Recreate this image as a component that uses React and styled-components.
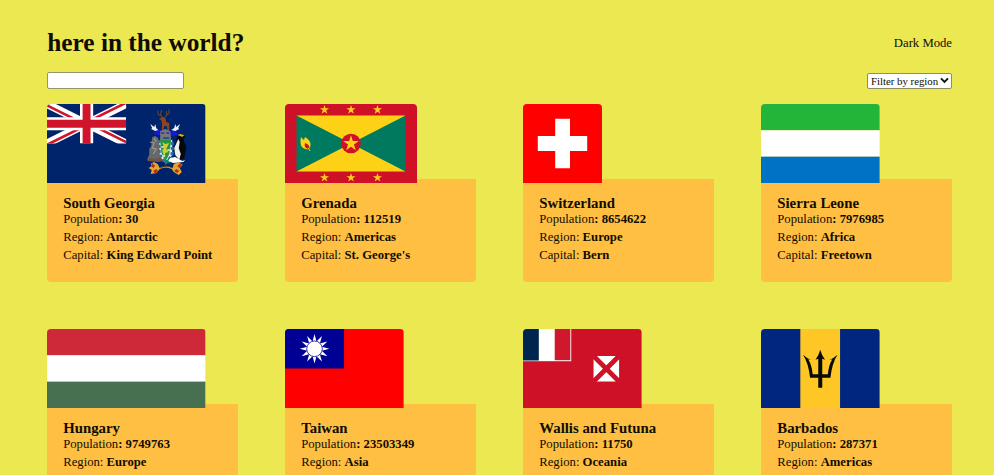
import React from "react";
import styled, { createGlobalStyle } from "styled-components";

const GlobalStyle = createGlobalStyle`
  * { box-sizing: border-box; }
  html, body { margin: 0; height: 100%; overflow: hidden; background: #ebe852; }
  body { font-family: "Liberation Serif", "Times New Roman", serif; font-size: 12.7px; color: #100c00; }
`;

const Page = styled.main`
  height: 475px;
  overflow: hidden;
  padding: 27.5px 42px 0 47.3px;
  background: #ebe852;
`;

const Bar = styled.header`
  display: flex;
  justify-content: space-between;
  align-items: center;
  width: 904.7px;
  height: 31px;
`;

const Heading = styled.h1`
  margin: -2px 0 0;
  font-size: 25.3px;
  line-height: 29px;
`;

const ModeToggle = styled.span`
  line-height: 15px;
`;

const Filters = styled.div`
  display: flex;
  justify-content: space-between;
  width: 904.7px;
  height: 17px;
  margin: 13.5px 0 15px;
`;

const SearchInput = styled.input`
  width: 136.5px;
  height: 17px;
  padding: 1px 2px;
  border: 1px solid #96946a;
  border-radius: 2px;
  background: #fff;
  font: inherit;
`;

const SelectWrap = styled.div`
  display: flex;
  align-items: center;
  justify-content: space-between;
  width: 85px;
  height: 16px;
  margin-top: 0.5px;
  padding: 0 2px 0 3px;
  border: 1px solid #8f8d62;
  border-radius: 2px;
  background: #fff;
  font-size: 10.8px;
  white-space: nowrap;
`;

const Grid = styled.section`
  display: grid;
  grid-template-columns: repeat(4, 190.4px);
  column-gap: 47.65px;
  row-gap: 47.5px;
`;

const Card = styled.article`
  height: 177.6px;
`;

const FlagFrame = styled.div`
  position: relative;
  width: ${(p) => p.$width}px;
  height: 79px;
  overflow: hidden;
  border-radius: 4px 4px 0 0;

  > svg { display: block; width: 100%; height: 100%; }
`;

const Details = styled.div`
  height: 102.6px;
  margin-top: -4px;
  padding: 16.2px 15.9px 0;
  border-radius: 0 0 4px 4px;
  background: #ffbf43;
`;

const Name = styled.h3`
  margin: 0 0 1px;
  font-size: 14.8px;
  line-height: 16px;
`;

const Fact = styled.p`
  margin: 0 0 3px;
  line-height: 15px;
  white-space: nowrap;
`;

const starPoints = (cx, cy, outer, inner, tips) =>
  Array.from({ length: tips * 2 }, (_, i) => {
    const r = i % 2 ? inner : outer;
    const a = (Math.PI * i) / tips - Math.PI / 2;
    return `${(cx + r * Math.cos(a)).toFixed(2)},${(cy + r * Math.sin(a)).toFixed(2)}`;
  }).join(" ");

const Star = ({ x, y, r }) => <polygon points={starPoints(x, y, r, r * 0.382, 5)} fill="#fcd116" />;

const SouthGeorgia = () => (
  <svg viewBox="0 0 158 79" preserveAspectRatio="none">
    <rect width="158" height="79" fill="#00246b" />
    <svg width="79" height="39.5" viewBox="0 0 60 30" preserveAspectRatio="none">
      <path d="M0 0 60 30M60 0 0 30" stroke="#fff" strokeWidth="6" />
      <path d="M0 1 30 16M60 29 30 14M60 -1 30 14M0 31 30 16" stroke="#cf142b" strokeWidth="2" />
      <path d="M30 0V30M0 15H60" stroke="#fff" strokeWidth="10" />
      <path d="M30 0V30M0 15H60" stroke="#cf142b" strokeWidth="6" />
    </svg>
    {/* deer crest */}
    <path d="M116.5 14.5 114 12 111 10.5 110.5 6.5M113 11.5 114.5 6M117.5 14 119.5 11 122 9 121.5 5.5M119.5 11 119 7" stroke="#694326" strokeWidth="1.1" fill="none" />
    <path d="m115 13 3 1 1 4 3 1v7h-1.7l-.8-4-2.5.3-.8 3.7h-1.5l.1-8-1-2-2-1z" fill="#8b451e" />
    {/* helm and mantling */}
    <path d="m108 28 3-3 5 3 1-2h4l2 2 6-2 1 5-5 1-4-2-7 1-4 0-4-1z" fill="#1717dc" />
    <path d="m113 27 5-2 5 2 1 9h-11z" fill="#77777b" />
    <path d="M114 29h3m2 0h3M116 34h6" stroke="#253b8f" strokeWidth="1.5" />
    <path d="m103 20 4 3 1-3 1 4 2 2-3 1-4-2 1-1zM133 20l-4 3-1-3-1 4-3 2 4 1 4-2-1-1z" fill="#eef1fb" />
    {/* shield */}
    <path d="M112 36h13v12q0 7-6.5 11-6.5-4-6.5-11z" fill="#e0e9f2" />
    <path d="M112 36v13q2 6 6.5 10 4.5-4 6.5-10V36" fill="none" stroke="#2c6dac" strokeWidth="3" strokeDasharray="3 2" />
    <path d="M113 36h11l-2 14-4 8-4-10z" fill="#219344" />
    <path d="m115 38 3 2 4-1-3 6 2 3-3 1-1 5-2-8 2-2z" fill="#d1cd35" />
    <path d="M114 43h3m3 3h3m-8 6h3" stroke="#e5e9ba" strokeWidth="1.4" />
    {/* seal */}
    <path d="m105 33 3-1 3 2 1 7v9l3 6-4 1h-10l-1-2 2-4v-6l2-3z" fill="#656969" />
    <path d="m103 38 4 1-2 5 4 1-3 5M107 34l2 4" stroke="#999b98" strokeWidth="1.1" fill="none" />
    <path d="m100 57 3-3 5 1 5-2 3 4-5 1z" fill="#725249" />
    {/* penguin */}
    <path d="m130 31 5-1 3 2-2 3 3 8-1 6-1 6-6 1-3-5-1-7 2-7z" fill="#07080c" />
    <path d="m131 35 1.5 3-1 6 2 6-1.5 6-4-5-1-7z" fill="#eff0ed" />
    <path d="m130 31 3-1 4 1-2 2-2-1z" fill="#d5b42c" />
    <path d="m116 58 5-3 3-2 1 4-3 2z" fill="#008b67" />
    <path d="m123 54 5-1 7 4 3-1-2 2-10 1-5-2z" fill="#fff" />
    {/* ribbon */}
    <path d="m104 60 3-2 4 2 2 4q7-3 13 0l1-4 5-2 4 3-3 3 2 4-3 3-5-3-2-3q-6-3-12 0l-3 4-6 1 1-4-3-2 3-2z" transform="translate(-.5 0)" fill="#dfa632" />
    <path d="m105 59 3 3-2 2-2-2M133 59l-3 3 2 2 3-2M106 67l3-2 2 2-3 3M132 67l-3-2-2 2 3 2" fill="#b82f19" />
    <path d="M113 64q6-3 12 0" fill="none" stroke="#77551c" strokeWidth="1.2" strokeDasharray="1 1" />
  </svg>
);

const Grenada = () => (
  <svg viewBox="0 0 132 79" preserveAspectRatio="none">
    <rect width="132" height="79" fill="#ce1126" />
    <rect x="11.5" y="11.5" width="109" height="56" fill="#007a5e" />
    <path d="M11.5 11.5h109L11.5 67.5h109z" fill="#fcd116" />
    <circle cx="66" cy="39.5" r="9.8" fill="#ce1126" />
    <Star x={66} y={39.5} r={8.2} />
    {[39.5, 66, 92.5].map((x) => (
      <React.Fragment key={x}>
        <Star x={x} y={5.8} r={4.8} />
        <Star x={x} y={73.7} r={4.8} />
      </React.Fragment>
    ))}
    <path d="M16 33c1 1 1.500 2 3 3l1-3c3 2 5.500 4 5.500 7 .3 4-2 6-5 5-4-1-6-4-4.500-12z" fill="#fcd116" />
    <path d="M20 39c3 1 5 3 4 5l-1 1c-3-1-4-3-3-6z" fill="#ce1126" />
    <path d="m23 44 2 3" stroke="#fcd116" />
  </svg>
);

const Switzerland = () => (
  <svg viewBox="0 0 79 79">
    <rect width="79" height="79" fill="#f00" />
    <path d="M32.2 14.8h14.8v17.3h17.2v14.8H47v17.3H32.2V46.9H14.8V32.1h17.4z" fill="#fff" />
  </svg>
);

const Tricolor = ({ colors }) => (
  <svg viewBox="0 0 3 3" preserveAspectRatio="none">
    {colors.map((fill, i) => <rect key={i} y={i} width="3" height="1" fill={fill} />)}
  </svg>
);

const Taiwan = () => (
  <svg viewBox="0 0 118.5 79" preserveAspectRatio="none">
    <rect width="118.5" height="79" fill="#f00" />
    <rect width="59" height="39.5" fill="#000095" />
    <polygon points={starPoints(29.5, 19.8, 14.8, 7.6, 12)} fill="#fff" />
    <circle cx="29.5" cy="19.8" r="7.8" fill="#fff" stroke="#000095" strokeWidth=".8" />
  </svg>
);

const Wallis = () => (
  <svg viewBox="0 0 118.5 79" preserveAspectRatio="none">
    <rect width="118.5" height="79" fill="#ce1126" />
    <rect width="48.2" height="32.2" fill="#fff" />
    <rect width="15.8" height="31.5" fill="#00264f" />
    <rect x="31.7" width="15.6" height="31.2" fill="#d0182c" />
    <rect x="70.5" y="27" width="25.5" height="25.5" fill="#fff" />
    <path d="m70.5 27 25.5 25.5M96 27 70.5 52.5" stroke="#ce1126" strokeWidth="4.7" />
  </svg>
);

const Barbados = () => (
  <svg viewBox="0 0 118.5 79" preserveAspectRatio="none">
    <rect width="118.5" height="79" fill="#00267f" />
    <rect x="39.3" width="39.7" height="79" fill="#ffc726" />
    <path d="M59.2 20.7Q60.500 26 64 30.800L61.200 29.800V45.300H66.800Q67.500 36.500 71.200 30.300L68.200 31Q73 29 76.400 25.700Q71 34 69.400 48.800H61.200V58.700H57.200V48.800H49Q47.400 34 42 25.700Q45.400 29 50.200 31L47.200 30.300Q50.900 36.500 51.600 45.300H57.200V29.800L54.400 30.800Q57.900 26 59.200 20.700Z" fill="#090b08" />
  </svg>
);

const COUNTRIES = [
  { name: "South Georgia", population: 30, region: "Antarctic", capital: "King Edward Point", width: 158.3, flag: <SouthGeorgia /> },
  { name: "Grenada", population: 112519, region: "Americas", capital: "St. George's", width: 132, flag: <Grenada /> },
  { name: "Switzerland", population: 8654622, region: "Europe", capital: "Bern", width: 79, flag: <Switzerland /> },
  { name: "Sierra Leone", population: 7976985, region: "Africa", capital: "Freetown", width: 118.6, flag: <Tricolor colors={["#22b53a", "#fff", "#0072c6"]} /> },
  { name: "Hungary", population: 9749763, region: "Europe", width: 158.3, flag: <Tricolor colors={["#ce2939", "#fff", "#477050"]} /> },
  { name: "Taiwan", population: 23503349, region: "Asia", width: 118.6, flag: <Taiwan /> },
  { name: "Wallis and Futuna", population: 11750, region: "Oceania", width: 118.6, flag: <Wallis /> },
  { name: "Barbados", population: 287371, region: "Americas", width: 118.6, flag: <Barbados /> },
];

export default function App() {
  return (
    <>
      <GlobalStyle />
      <Page>
        <Bar>
          <Heading>here in the world?</Heading>
          <ModeToggle>Dark Mode</ModeToggle>
        </Bar>
        <Filters>
          <SearchInput aria-label="Search" />
          <SelectWrap role="combobox" aria-label="Filter by region">
            Filter by region
            <svg width="9" height="7" viewBox="0 0 9 7">
              <path d="m1 1.300 3.500 3.500L8 1.300" fill="none" stroke="#111" strokeWidth="1.9" />
            </svg>
          </SelectWrap>
        </Filters>
        <Grid>
          {COUNTRIES.map((c) => (
            <Card key={c.name}>
              <FlagFrame $width={c.width}>{c.flag}</FlagFrame>
              <Details>
                <Name>{c.name}</Name>
                <Fact>Population<b>: {c.population}</b></Fact>
                <Fact>Region: <b>{c.region}</b></Fact>
                {c.capital && <Fact>Capital: <b>{c.capital}</b></Fact>}
              </Details>
            </Card>
          ))}
        </Grid>
      </Page>
    </>
  );
}
